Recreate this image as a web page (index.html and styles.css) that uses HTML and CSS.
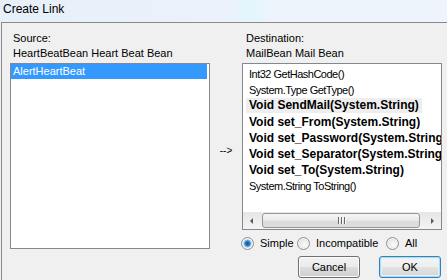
FILE: index.html
```html
<html>
<head>
  <title>Create Link</title>
  <link rel="stylesheet" href="styles.css">
</head>
<body>

<div class="titlebar">Create Link</div>

<div class="window">
  <div class="panel source">
    <div class="label">Source:</div>
    <div class="label">HeartBeatBean Heart Beat Bean</div>
    <div class="listbox source-list">
      <div class="row selected">AlertHeartBeat</div>
    </div>
  </div>

  <div class="arrow">--&gt;</div>

  <div class="panel dest">
    <div class="label">Destination:</div>
    <div class="label">MailBean Mail Bean</div>
    <div class="listbox dest-list">
      <div class="rows">
        <div class="row">Int32 GetHashCode()</div>
        <div class="row">System.Type GetType()</div>
        <div class="row bold"><span class="focus">Void SendMail(System.String)</span></div>
        <div class="row bold">Void set_From(System.String)</div>
        <div class="row bold">Void set_Password(System.String)</div>
        <div class="row bold">Void set_Separator(System.String)</div>
        <div class="row bold">Void set_To(System.String)</div>
        <div class="row">System.String ToString()</div>
      </div>
      <div class="hscroll">
        <div class="sb-btn"><span class="tri left"></span></div>
        <div class="sb-track">
          <div class="sb-thumb"><span class="grip"></span><span class="grip"></span><span class="grip"></span></div>
        </div>
        <div class="sb-btn"><span class="tri right"></span></div>
      </div>
    </div>

    <div class="filters">
      <label class="radio simple"><span class="dot checked"></span>Simple</label>
      <label class="radio incompatible"><span class="dot"></span>Incompatible</label>
      <label class="radio"><span class="dot"></span>All</label>
    </div>

    <div class="actions">
      <button class="btn">Cancel</button>
      <button class="btn default">OK</button>
    </div>
  </div>
</div>

</body>
</html>
```

FILE: styles.css
```css
* {
  box-sizing: border-box;
}

body {
  margin: 0;
  width: 447px;
  height: 280px;
  overflow: hidden;
  background: #f0f0f0;
  color: #000;
  font-family: "Liberation Sans", Arial, sans-serif;
  font-size: 11px;
}

.titlebar {
  height: 22px;
  line-height: 19px;
  padding-left: 3px;
  font-size: 12px;
  background: linear-gradient(to right, #e7eff9 0%, #ebf2fb 52%, #e2f6fc 55%, #e4f6fc 58%, #eef4fb 61%, #eef4fb 100%);
}

.window {
  display: flex;
  height: 258px;
  margin-left: 1px;
  padding: 8px 0 0 8px;
  border-left: 1px solid #8a8a8a;
  border-top: 1px solid #8a8a8a;
  background: #f0f0f0;
}

.panel {
  width: 200px;
  display: flex;
  flex-direction: column;
}

.label {
  line-height: 15px;
  padding-left: 3px;
  white-space: nowrap;
}

.dest .label {
  padding-left: 4px;
}

.listbox {
  margin-top: 2px;
  border: 1px solid #828790;
  background: #fff;
  overflow: hidden;
}

.source-list {
  height: 186px;
}

.source-list .row {
  line-height: 15px;
  padding-left: 2px;
  margin-right: 2px;
}

.row.selected {
  background: #3399ff;
  color: #fff;
}

.arrow {
  width: 32px;
  padding-top: 112px;
  line-height: 15px;
  font-size: 10px;
  text-align: center;
}

.dest-list {
  height: 167px;
  display: flex;
  flex-direction: column;
}

.rows {
  flex: 1;
  padding: 2px 0 0 6px;
  overflow: hidden;
  white-space: nowrap;
}

.rows .row {
  height: 16px;
  line-height: 16px;
  letter-spacing: -0.5px;
}

.rows .row.bold {
  font-size: 12px;
  font-weight: bold;
  letter-spacing: 0;
}

.focus {
  display: inline-block;
  margin-left: -3px;
  padding: 0 3px;
  line-height: 15px;
  background: #eeeeee;
}

.hscroll {
  display: flex;
  height: 17px;
  background: linear-gradient(#e6e6e6, #f4f4f4);
}

.sb-btn {
  width: 17px;
  display: flex;
  align-items: center;
  justify-content: center;
}

.tri {
  width: 0;
  height: 0;
  border-top: 3px solid transparent;
  border-bottom: 3px solid transparent;
}

.tri.left {
  border-right: 3px solid #5a5a5a;
}

.tri.right {
  border-left: 3px solid #5a5a5a;
}

.sb-track {
  flex: 1;
  padding: 1px 0 1px 2px;
}

.sb-thumb {
  width: 158px;
  height: 15px;
  display: flex;
  align-items: center;
  justify-content: center;
  gap: 2px;
  border: 1px solid #979797;
  border-radius: 3px;
  background: linear-gradient(#f6f6f6, #e9e9e9 50%, #dadada 51%, #dedede);
}

.grip {
  width: 1px;
  height: 7px;
  background: #6a6a6a;
  box-shadow: 1px 0 0 #f8f8f8;
}

.filters {
  display: flex;
  align-items: center;
  height: 14px;
  margin: 6px 0 0 -1px;
}

.radio {
  display: flex;
  align-items: center;
  white-space: nowrap;
}

.radio.simple {
  width: 56px;
}

.radio.incompatible {
  width: 89px;
}

.dot {
  width: 13px;
  height: 13px;
  margin-right: 6px;
  border: 1px solid #8e8f8f;
  border-radius: 50%;
  background: radial-gradient(circle at 60% 60%, #fbfbfb 0, #e6e6e6 60%, #d2d2d2 100%);
  box-shadow: inset 0 0 0 1px #f4f4f4;
}

.dot.checked {
  background: radial-gradient(circle, #16528f 0, #2c73b8 2px, #7fc0ec 3.5px, #c9e6f8 4.2px, #f2f2f2 5px);
}

.actions {
  display: flex;
  justify-content: flex-end;
  gap: 19px;
  margin: 6px 1px 0 0;
}

.btn {
  width: 62px;
  height: 22px;
  padding: 0;
  border: 1px solid #707070;
  border-radius: 3px;
  background: linear-gradient(#f2f2f2 0%, #ebebeb 50%, #dddddd 51%, #cfcfcf 100%);
  box-shadow: inset 0 0 0 1px #fcfcfc;
  font-family: "Liberation Sans", Arial, sans-serif;
  font-size: 11px;
  color: #000;
}

.btn.default {
  border-color: #3c7fb1;
  background: linear-gradient(#f4f4f4 0%, #eeeeee 50%, #e2e2e2 51%, #d6d6d6 100%);
  box-shadow: inset 0 0 0 1px #a9dcf6, inset 0 0 0 2px #e2f3fc;
}
```
